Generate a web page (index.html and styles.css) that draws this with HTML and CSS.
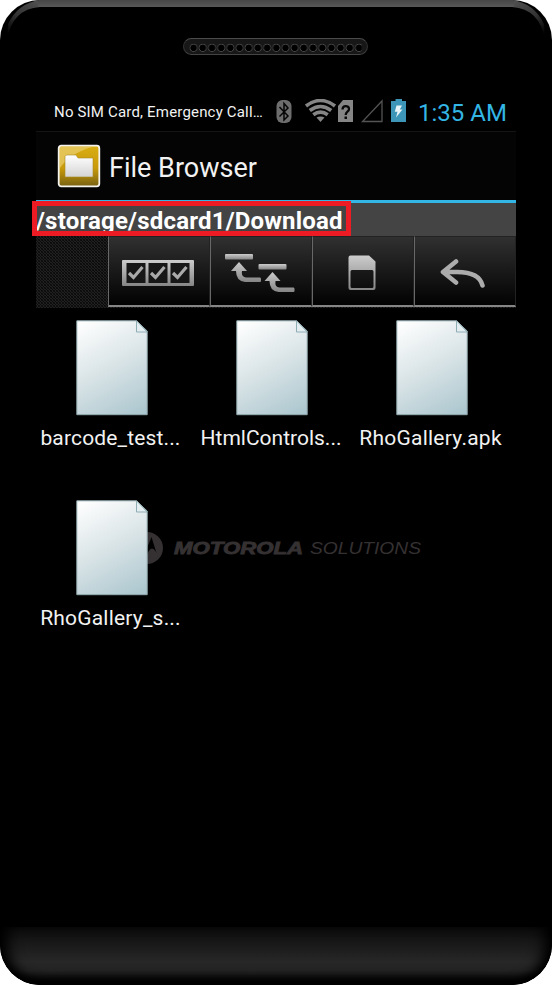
FILE: index.html
```html
<!DOCTYPE html>
<html lang="en">
<head>
<meta charset="utf-8">
<title>File Browser</title>
<link rel="stylesheet" href="styles.css">
</head>
<body>
<svg width="0" height="0" class="defs">
  <defs>
    <linearGradient id="paper" gradientUnits="userSpaceOnUse" x1="8" y1="0" x2="60" y2="98"><stop offset="0" stop-color="#fff"/><stop offset=".5" stop-color="#d8e3e6"/><stop offset="1" stop-color="#abc6ce"/></linearGradient>
    <linearGradient id="metal" x1="0" y1="0" x2="0" y2="1"><stop offset="0" stop-color="#ccc"/><stop offset="1" stop-color="#858585"/></linearGradient>
    <symbol id="doc" viewBox="0 0 72 96">
      <path d="M.8.8H60.500L71.200 11V94.700H.8z" fill="url(#paper)" stroke="#91a9ae"/>
      <path d="M60.500.8V12H71.200z" fill="#e4edf0" stroke="#8fadb5"/>
    </symbol>
  </defs>
</svg>
<div class="phone">
  <svg class="shine" width="552" height="44" viewBox="0 0 552 44">
    <defs>
      <linearGradient id="rim" x1="0" y1="0" x2="0" y2="7" gradientUnits="userSpaceOnUse"><stop offset="0" stop-color="#464646"/><stop offset="1" stop-color="#585858"/></linearGradient>
      <linearGradient id="rimL" x1="40" y1="3" x2="9" y2="36" gradientUnits="userSpaceOnUse"><stop offset="0" stop-color="#505050"/><stop offset=".55" stop-color="#333"/><stop offset="1" stop-color="#000"/></linearGradient>
      <linearGradient id="rimR" x1="512" y1="3" x2="543" y2="36" gradientUnits="userSpaceOnUse"><stop offset="0" stop-color="#505050"/><stop offset=".55" stop-color="#333"/><stop offset="1" stop-color="#000"/></linearGradient>
    </defs>
    <path d="M40 0Q18 3 8 24L7 40Q12 9 40 7z" fill="url(#rimL)"/>
    <path d="M512 0Q534 3 544 24L545 40Q540 9 512 7z" fill="url(#rimR)"/>
    <path d="M38 0H514V7H38z" fill="url(#rim)"/>
  </svg>
  <div class="speaker"></div>

  <main class="screen">
    <header class="status">
      <span class="carrier">No SIM Card, Emergency Call…</span>
      <svg class="status-icons" width="136" height="26" viewBox="0 0 136 26">
        <rect x="1.500" y="1" width="15" height="23" rx="6" fill="#6d6d6d"/>
        <path d="M4.500 8L13 17L9 21V4.500L13 9L4.500 17.500" fill="none" stroke="#050505" stroke-width="1.500"/>
        <g fill="none" stroke="#858585" stroke-width="3.600">
          <path d="M31 7Q45.500-4 60 7"/><path d="M34.800 11.500Q45.500 3.500 56.200 11.500"/><path d="M38.300 15.800Q45.500 10.500 52.700 15.800"/>
        </g>
        <path d="M41.500 18.500Q45.500 16.500 49.500 18.500L45.500 23z" fill="#858585"/>
        <path d="M68 1H78V23H63V7z" fill="#858585"/>
        <path d="M67.500 10.500C67.500 6 74 6 74 10C74 13 70.700 12.500 70.700 16" fill="none" stroke="#080808" stroke-width="2.300"/><rect x="69.500" y="17.500" width="2.500" height="2.500" fill="#080808"/>
        <path d="M107 2V22.500H87.500z" fill="none" stroke="#535353" stroke-width="1.300"/>
        <path d="M120.500 0H127V2H131V23H116V2H120.500z" fill="#3d96b8"/>
        <path d="M121.500 6.500H127L124.800 10.500H127.500L121 18.500L122.500 12.800H119.800z" fill="#e8f4f8"/>
      </svg>
      <span class="clock">1:35 AM</span>
    </header>

    <div class="titlebar">
      <svg width="44" height="44" viewBox="0 0 44 44">
        <defs>
          <linearGradient id="gold" x1="0" y1="0" x2="0" y2="1"><stop offset="0" stop-color="#d9ad12"/><stop offset=".55" stop-color="#c99b0b"/><stop offset="1" stop-color="#786112"/></linearGradient>
          <linearGradient id="folder" x1="0" y1="0" x2="0" y2="1"><stop offset="0" stop-color="#fff"/><stop offset="1" stop-color="#d4d4d4"/></linearGradient>
        </defs>
        <rect x="1.700" y="1.700" width="40.600" height="40.600" rx="2.500" fill="url(#gold)" stroke="#f5f3ed" stroke-width="1.800"/>
        <path d="M3 3H35Q12 10 3 24z" fill="#ecd782" opacity=".6"/>
        <path d="M8 33V12.500L9.500 11H19L21 14H36V33z" fill="url(#folder)" stroke="#a98922" stroke-width=".6"/>
      </svg>
      <h1>File Browser</h1>
    </div>

    <div class="pathbar"><div class="path"><span>/storage/sdcard1/Download</span></div></div>

    <nav class="toolbar">
      <div class="tool">
        <svg width="74" height="28" viewBox="0 0 74 28">
          <rect x="1" y="1" width="72" height="26" rx="1" fill="url(#metal)"/>
          <g fill="#171717"><rect x="5.500" y="4" width="19" height="20"/><rect x="27.500" y="4" width="19" height="20"/><rect x="49.500" y="4" width="19" height="20"/></g>
          <g fill="none" stroke="#aaa" stroke-width="3.200"><path d="M8 14L12.500 18.500L21.500 8"/><path d="M30 14L34.500 18.500L43.500 8"/><path d="M52 14L56.500 18.500L65.500 8"/></g>
        </svg>
      </div>
      <div class="tool">
        <svg width="72" height="40" viewBox="0 0 72 40">
          <g id="up" fill="url(#metal)">
            <rect x="1" y="1" width="28" height="5.500" rx="1"/>
            <path d="M15 9L23 18H18Q17 24 22 24.500H36Q37 24.500 37 26V28Q37 29 36 29H21Q12 28 12 18H7z"/>
          </g>
          <use href="#up" x="33.500" y="10"/>
        </svg>
      </div>
      <div class="tool">
        <svg width="28" height="36" viewBox="0 0 28 36">
          <path fill="url(#metal)" fill-rule="evenodd" d="M2.500.5H21L27.500 6.500V33Q27.500 35 25.500 35H2.500Q.5 35 .5 33V2.500Q.5.500 2.500.5zM4 15Q2.500 15 2.500 16.500V31.500Q2.500 33 4 33H24Q25.500 33 25.500 31.500V16.500Q25.500 15 24 15z"/>
        </svg>
      </div>
      <div class="tool back">
        <svg width="46" height="30" viewBox="0 0 46 30">
          <path d="M17 3.500L4 14L17 24.500M5 14H18C31 14 41 17 43.500 27.500" fill="none" stroke="#acacac" stroke-width="4.600" stroke-linecap="round" stroke-linejoin="round"/>
        </svg>
      </div>
    </nav>

    <section class="files">
      <svg class="brand" width="294" height="36" viewBox="0 0 294 36">
        <circle cx="18" cy="18" r="16" fill="#353132"/>
        <path d="M28.700 27L22.500 7L18 18L13.500 7L7.300 27Q9 19 13 18.500Q16 19 18 25Q20 19 23 18.500Q27 19 28.700 27z" fill="#000"/>
        <text class="brand-bold" x="45" y="23.800" textLength="129" lengthAdjust="spacingAndGlyphs">MOTOROLA</text>
        <text class="brand-thin" x="181" y="23.800" textLength="111" lengthAdjust="spacingAndGlyphs">SOLUTIONS</text>
      </svg>
      <div class="file"><svg width="72" height="96"><use href="#doc"/></svg><span class="n1">barcode_test...</span></div>
      <div class="file"><svg width="72" height="96"><use href="#doc"/></svg><span class="n2">HtmlControls...</span></div>
      <div class="file"><svg width="72" height="96"><use href="#doc"/></svg><span class="n3">RhoGallery.apk</span></div>
      <div class="file"><svg width="72" height="96"><use href="#doc"/></svg><span class="n4">RhoGallery_s...</span></div>
    </section>
  </main>
  <footer class="chin"></footer>
</div>
</body>
</html>
```

FILE: styles.css
```css
* { box-sizing: border-box; }
body { margin: 0; background: #fff; font-family: Roboto, "Liberation Sans", sans-serif; color: #f2f2f2; }
svg { display: block; flex: none; }
.defs { position: absolute; }
.phone { position: relative; width: 552px; height: 985px; display: flex; flex-direction: column; align-items: center; background: #000; border-radius: 40px; overflow: hidden; }
.shine { position: absolute; top: 0; left: 0; }
.speaker {
  flex: none; width: 185px; height: 17px; margin: 38px 1px 0 0; border: 1px solid #333; border-top-color: #4b4b4b; border-bottom-color: #444; border-radius: 9px;
  padding: 0 5px;
  background: radial-gradient(circle at 50% 55%, #000 3px, #4d4d4d 3.600px, #171717 4.400px) 0 0 / 9.200px 16px content-box, #171717;
}
.screen { flex: none; width: 480px; height: 835px; margin-top: 37px; }
.status { height: 40px; padding: 1px 0 0 18px; display: flex; align-items: center; border-bottom: 1px solid #151515; white-space: nowrap; }
.carrier { width: 221px; font-size: 15px; letter-spacing: .18px; }
.clock { margin: 2px 0 0 7px; font-size: 24px; color: #33b5e5; letter-spacing: 0; }
.titlebar { height: 68px; padding-left: 21px; display: flex; align-items: center; gap: 8px; background: #040404; }
h1 { margin: 4px 0 0; font-size: 27px; font-weight: 400; line-height: 32px; letter-spacing: 0; }
.pathbar { height: 36px; border-top: 3px solid #33b5e5; background: #444; }
.path { width: 319px; height: 35px; margin: -2px 0 0 -4px; border: 5px solid #ed1c24; overflow: hidden; position: relative; color: #fff; font-size: 24px; font-weight: 700; line-height: 30px; letter-spacing: .2px; white-space: nowrap; }
.path span { margin-left: -1px; }
.toolbar { height: 72px; padding-left: 72px; display: grid; grid-template-columns: repeat(4, 102px); background: repeating-linear-gradient(45deg, transparent 0 1.400px, #0b0b0b 1.400px 2.120px), repeating-linear-gradient(-45deg, #202020 0 1.400px, #111 1.400px 2.120px); }
.tool { display: flex; align-items: center; justify-content: center; height: 71px; padding: 3px 2px 0 0; border: 1px solid #222; border-left-color: #686868; border-bottom: 2px solid #858585; background: linear-gradient(#303030, #020202); }
.back { padding-right: 6px; }
.files { position: relative; width: 480px; margin-left: -4px; padding-top: 12px; display: grid; grid-template-columns: repeat(3, 160px); grid-auto-rows: 180px; }
.brand { position: absolute; left: 97px; top: 222px; }
.brand text { font-family: "Liberation Sans", Arial, sans-serif; font-size: 16.500px; font-style: italic; fill: #353132; }
.brand-bold { font-weight: 700; stroke: #353132; stroke-width: .8px; }
.file { position: relative; display: flex; flex-direction: column; align-items: center; gap: 8px; }
.file span { margin-right: 2px; font-size: 21px; line-height: 28px; white-space: nowrap; }
.n1 { letter-spacing: .15px; }
.n3 { letter-spacing: .25px; }
.n4 { letter-spacing: .2px; }
.file .n1, .file .n3, .file .n4 { margin-right: 3px; }
.chin { flex: none; width: 552px; height: 58px; background: linear-gradient(#0c0c0c, #272727 60%, #222 75%, #000 98%); border-radius: 0 0 40px 40px; box-shadow: inset 14px 0 14px -6px #000, inset -14px 0 14px -6px #000, inset 0 -6px 8px -2px #000; }
```
